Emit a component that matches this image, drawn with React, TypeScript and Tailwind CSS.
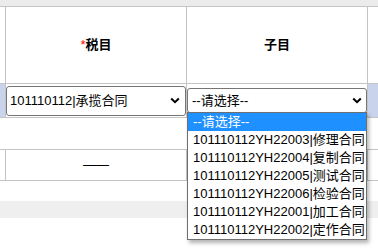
import React from "react";

const Chevron = () => (
  <svg width="10" height="7" viewBox="0 0 10 7" className="shrink-0">
    <path d="M1.2 1.5 L5 5.2 L8.8 1.5" fill="none" stroke="#000" strokeWidth="2" />
  </svg>
);

const items = [
  "--请选择--",
  "101110112YH22003|修理合同",
  "101110112YH22004|复制合同",
  "101110112YH22005|测试合同",
  "101110112YH22006|检验合同",
  "101110112YH22001|加工合同",
  "101110112YH22002|定作合同",
];

export default function App() {
  return (
    <div className="relative w-[378px] h-[252px] overflow-hidden bg-white text-black font-['Liberation_Sans','Noto_Sans_CJK_SC',sans-serif]">
      <div className="h-[6px] bg-[#ebebeb]" />
      {/* header */}
      <div className="flex h-[77px] border-t border-[#c4c4c4]">
        <div className="w-[5px]" />
        <div className="w-[181px] border-l border-[#c4c4c4] flex items-center justify-center text-[13px] font-bold">
          <span className="text-[#ff0000] font-normal">*</span>
          <span>税目</span>
        </div>
        <div className="w-[181px] border-l border-[#c4c4c4] flex items-center justify-center text-[13px] font-bold">
          子目
        </div>
        <div className="flex-1 border-l border-[#c4c4c4]" />
      </div>
      {/* select row */}
      <div className="flex h-[34px] border-t border-[#c4c4c4]">
        <div className="w-[5px] bg-[#c9d3ec]" />
        <div className="w-[181px] border-l border-[#c4c4c4] flex items-center">
          <div className="h-[30px] w-full border border-[#767676] rounded-[3px] flex items-center justify-between pl-[3px] pr-[5px] text-[13px]">
            <span>101110112|承揽合同</span>
            <Chevron />
          </div>
        </div>
        <div className="w-[181px] border-l border-[#c4c4c4] flex items-center">
          <div className="h-[25px] w-full border border-[#767676] rounded-[3px] flex items-center justify-between pl-[4px] pr-[4px] text-[13px]">
            <span>--请选择--</span>
            <Chevron />
          </div>
        </div>
        <div className="flex-1 border-l border-[#c4c4c4] bg-[#c9d3ec]" />
      </div>
      {/* blank row */}
      <div className="h-[32px] border-t border-[#c4c4c4]" />
      {/* dash row */}
      <div className="flex h-[32px] border-t border-b border-[#c4c4c4]">
        <div className="w-[5px]" />
        <div className="w-[181px] border-l border-[#c4c4c4] flex items-center justify-center text-[13px]">
          ——
        </div>
        <div className="w-[181px] border-l border-[#c4c4c4]" />
        <div className="flex-1 border-l border-[#c4c4c4]" />
      </div>
      <div className="h-[20px]" />
      <div className="h-[17px] bg-[#efefef]" />

      {/* dropdown list */}
      <div className="absolute left-[187px] top-[112px] w-[180px] border border-[#6f6f6f] bg-white shadow-[2px_3px_4px_rgba(0,0,0,0.3)]">
        {items.map((t, i) => (
          <div
            key={t}
            className={
              i === 0
                ? "h-[18px] pl-[5px] text-[13px] leading-[18px] whitespace-nowrap bg-[#1e90ff] text-white"
                : "h-[18px] pl-[5px] text-[13px] leading-[18px] whitespace-nowrap"
            }
          >
            {t}
          </div>
        ))}
      </div>
    </div>
  );
}
